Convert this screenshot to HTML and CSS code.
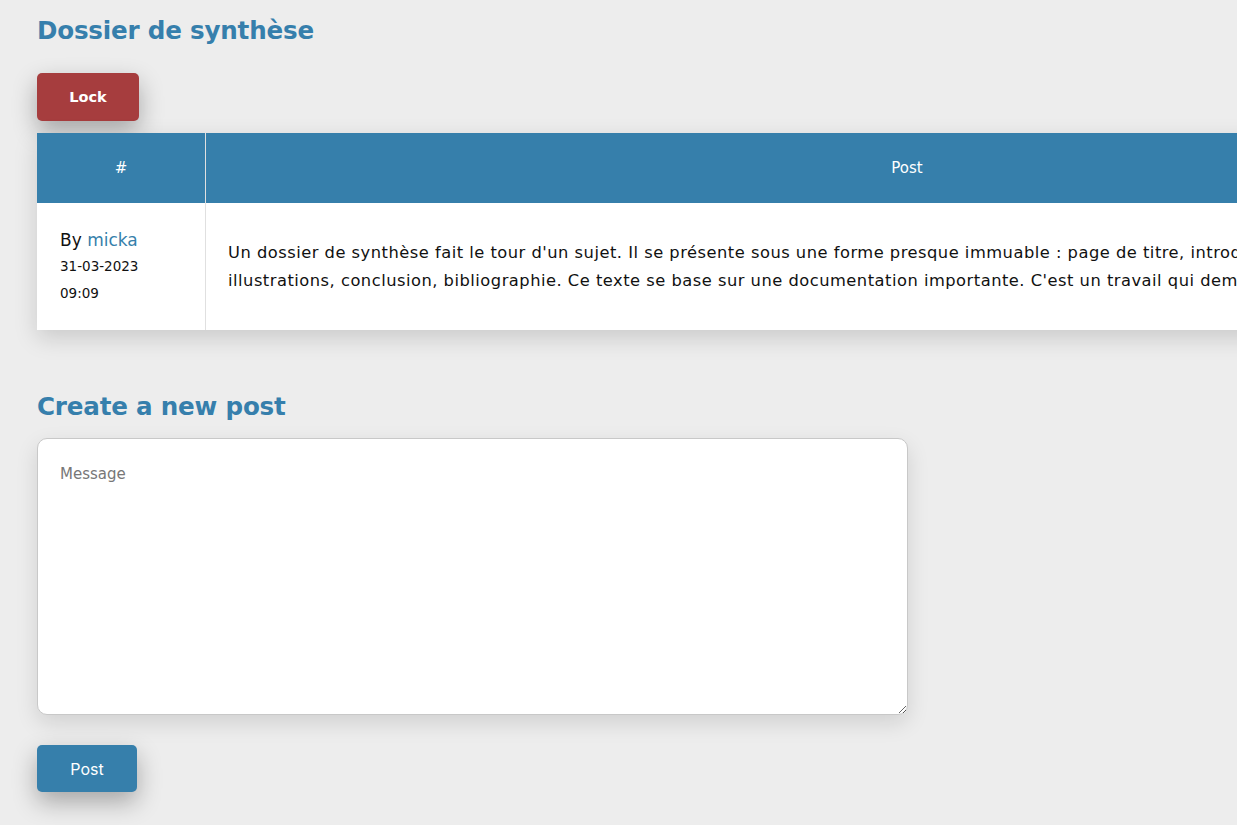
FILE: index.html
```html
<!DOCTYPE html>
<html lang="fr">
<head>
<meta charset="utf-8">
<title>Dossier de synthèse</title>
<link rel="stylesheet" href="styles.css">
</head>
<body>
<main class="page">
  <h1 class="title">Dossier de synthèse</h1>
  <button class="btn btn-lock" type="button">Lock</button>
  <table class="posts">
    <thead>
      <tr>
        <th class="col-author">#</th>
        <th class="col-post">Post</th>
      </tr>
    </thead>
    <tbody>
      <tr>
        <td class="author">
          <div class="by">By <a class="user" href="#">micka</a></div>
          <div class="meta">31-03-2023</div>
          <div class="meta">09:09</div>
        </td>
        <td class="content">Un dossier de synthèse fait le tour d'un sujet. Il se présente sous une forme presque immuable : page de titre, introduction, développement, illustrations, conclusion, bibliographie. Ce texte se base sur une documentation importante. C'est un travail qui demande du temps.</td>
      </tr>
    </tbody>
  </table>

  <h2 class="title title-new">Create a new post</h2>
  <form class="new-post">
    <textarea class="message" placeholder="Message"></textarea>
    <button class="btn btn-post" type="button">Post</button>
  </form>
</main>
</body>
</html>
```
FILE: styles.css
```css
html, body {
  margin: 0;
  padding: 0;
  overflow: hidden;
}
body {
  min-height: 100vh;
  background: #ededed;
  font-family: "DejaVu Sans", "Open Sans", sans-serif;
  color: #111;
}
.page {
  padding: 14px 0 0 37px;
}
.title {
  margin: 0;
  font-family: "DejaVu Sans", sans-serif;
  font-weight: 700;
  font-size: 24.6px;
  line-height: 34px;
  color: #367fac;
  letter-spacing: -0.2px;
}
.btn {
  display: block;
  border: none;
  border-radius: 5px;
  color: #fff;
  cursor: pointer;
  box-shadow: 0 10px 24px rgba(0, 0, 0, 0.3);
}
.btn-lock {
  margin-top: 25px;
  width: 102px;
  height: 48px;
  background: #a63d3e;
  font-family: "DejaVu Sans", sans-serif;
  font-weight: 700;
  font-size: 14.5px;
}
.posts {
  margin-top: 12px;
  width: 1571px;
  border-collapse: collapse;
  background: #fff;
  box-shadow: 0 8px 22px rgba(0, 0, 0, 0.15);
}
.posts th {
  height: 70px;
  background: #367fab;
  color: #fff;
  font-weight: 400;
  font-size: 15px;
  padding: 0;
}
.col-author {
  width: 168px;
  border-right: 1px solid #e0e0e0;
}
.posts td {
  height: 127px;
  box-sizing: border-box;
  vertical-align: middle;
}
.author {
  padding: 0 0 0 23px;
  border-right: 1px solid #e0e0e0;
}
.by {
  font-size: 17px;
  line-height: 26px;
}
.user {
  color: #367fab;
  text-decoration: none;
}
.meta {
  font-size: 13.5px;
  line-height: 27px;
}
.content {
  padding: 0 100px 0 22px;
  font-size: 16.3px;
  letter-spacing: 0.5px;
  line-height: 28px;
}
.title-new {
  margin-top: 60px;
}
.new-post {
  margin: 0;
}
.message {
  display: block;
  margin-top: 14px;
  box-sizing: border-box;
  width: 871px;
  height: 277px;
  border: 1px solid #c8c8c8;
  border-radius: 10px;
  padding: 26px 22px;
  background: #fff;
  font-family: "DejaVu Sans", sans-serif;
  font-size: 15px;
  box-shadow: 0 8px 22px rgba(0, 0, 0, 0.12);
  outline: none;
}
.message::placeholder {
  color: #777;
}
.btn-post {
  margin-top: 30px;
  width: 100px;
  height: 47px;
  background: #367fab;
  font-family: "Inter", sans-serif;
  font-size: 16px;
}
```
